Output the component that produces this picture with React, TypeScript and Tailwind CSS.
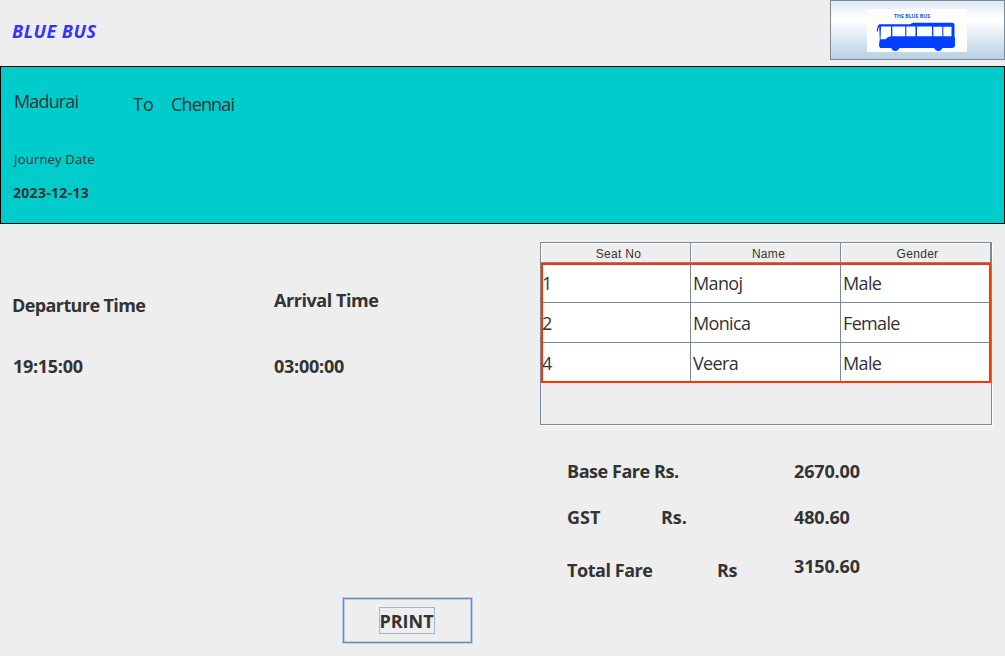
import React from "react";

const passengers = [
  { seat: "1", name: "Manoj", gender: "Male" },
  { seat: "2", name: "Monica", gender: "Female" },
  { seat: "4", name: "Veera", gender: "Male" },
];

function BusLogo() {
  return (
    <svg width="100" height="43" viewBox="0 0 100 43" className="-ml-0.5 block">
      <rect width="100" height="43" fill="#fdfdfb" />
      <text x="27" y="8.800" fontFamily="Open Sans, sans-serif" fontWeight="700" fontSize="5.2" textLength="36" lengthAdjust="spacingAndGlyphs" fill="#1a50f5">
        THE BLUE BUS
      </text>
      <path
        d="M12 15.300H43L46 13.700H85Q87.500 13.700 87.500 16.500V28L88 29V37Q87.800 39 85 39H75.300A4.200 4.200 0 0 1 67.300 39H32.300A4.200 4.200 0 0 1 24.300 39H13.500Q12 38.500 12 36L12.800 30Z"
        fill="#0040ff"
      />
      <path d="M12.500 16Q10.800 17 10.300 22.500" fill="none" stroke="#0040ff" strokeWidth="1.200" />
      <path
        d="M14 17.500H24V27.300Q20.500 28 18.500 30.300H13.500ZM25.300 17.500H38.200V27.300H25.300ZM39.300 17.500H48.500V27.300H39.300ZM50 17.500H65V27.300H50ZM66.300 17.700H75.300V27.300H66.300ZM76.300 17.700H84.500V27.300H76.300Z"
        fill="#fdfdfb"
      />
    </svg>
  );
}

function Header() {
  return (
    <header className="flex h-[66px] items-start justify-between">
      <h1 className="ml-3 mt-[19px] text-[18px] font-bold italic leading-6 tracking-[0.5px] text-[#3333ff]">BLUE BUS</h1>
      <button className="flex h-[60px] w-[175px] items-center justify-center border border-[#7a8a99] bg-[linear-gradient(#dde8f3_0%,#ffffff_30%,#ffffff_34%,#b8cfe5_100%)]">
        <BusLogo />
      </button>
    </header>
  );
}

function Journey() {
  return (
    <section className="h-[158px] border border-black bg-[#00cccc] pl-3">
      <div className="flex items-start pt-[22px] text-[18px] leading-6">
        <span className="w-[120px] pl-px tracking-[-0.85px]">Madurai</span>
        <span className="mt-[3px] w-[38px]">To</span>
        <span className="mt-[3px] tracking-[-0.85px]">Chennai</span>
      </div>
      <p className="mt-[33px] pl-px text-[13px] leading-5 tracking-[0.2px]">Journey Date</p>
      <p className="mt-[14px] text-[14px] font-bold leading-5 tracking-[0.3px]">2023-12-13</p>
    </section>
  );
}

function Times() {
  return (
    <div className="flex w-[540px] text-[18px] font-bold leading-6">
      <div className="w-[262px] pl-3 pt-[69px]">
        <p className="tracking-[-0.6px]">Departure Time</p>
        <p className="mt-[37px] pl-px tracking-[-0.3px]">19:15:00</p>
      </div>
      <div className="pl-3 pt-[64px]">
        <p className="tracking-[-0.45px]">Arrival Time</p>
        <p className="mt-[42px] tracking-[-0.25px]">03:00:00</p>
      </div>
    </div>
  );
}

function PassengerTable() {
  return (
    <div className="mt-[18px] h-[183px] w-[452px] border border-[#7a8a99] shadow-[1px_1px_0_#ffffff]">
      <div className="grid h-5 grid-cols-[150px_150px_150px] border-b border-[#7a8a99] text-center font-['Liberation_Sans',sans-serif] text-[12px] leading-[22px] tracking-[0.3px]">
        <span className="h-[19px] border-r border-[#7a8a99] pl-1.5 shadow-[inset_1px_1px_0_#ffffff]">Seat No</span>
        <span className="h-[19px] border-r border-[#7a8a99] pl-1.5 shadow-[inset_1px_1px_0_#ffffff]">Name</span>
        <span className="h-[19px] border-r border-[#7a8a99] pl-1 shadow-[inset_1px_1px_0_#ffffff]">Gender</span>
      </div>
      <div className="h-[120px] w-[450px] border-2 border-[#ff3300] bg-white text-[18px] tracking-[-0.65px]">
        {passengers.map((p) => (
          <div
            key={p.seat}
            className="grid h-10 grid-cols-[148px_150px_148px] border-b border-[#7a8a99] leading-6 first:h-[38px] last:h-[38px] last:border-b-0 [&>span]:pt-[8px] first:[&>span]:pt-[6px]"
          >
            <span className="-ml-px border-r border-[#7a8a99]">{p.seat}</span>
            <span className="border-r border-[#7a8a99] pl-0.5">{p.name}</span>
            <span className="pl-0.5">{p.gender}</span>
          </div>
        ))}
      </div>
    </div>
  );
}

function Fares() {
  return (
    <div className="flex pl-[27px] pt-[34px] text-[18px] font-bold leading-6">
      <div className="w-[227px] tracking-[-0.45px]">
        <p>Base Fare Rs.</p>
        <p className="mt-[22px] flex tracking-[-0.1px]">
          <span className="w-[94px] tracking-normal">GST</span>
          <span>Rs.</span>
        </p>
        <p className="mt-[29px] flex">
          <span className="w-[150px]">Total Fare</span>
          <span>Rs</span>
        </p>
      </div>
      <div className="tracking-[-0.15px]">
        <p>2670.00</p>
        <p className="mt-[22px]">480.60</p>
        <p className="mt-[25px]">3150.60</p>
      </div>
    </div>
  );
}

export default function App() {
  return (
    <main className="flex h-[656px] w-[1005px] flex-col overflow-hidden bg-[#eeeeee] font-['Open_Sans','Noto_Sans',sans-serif] text-[#333333]">
      <Header />
      <Journey />
      <div className="flex h-[373px]">
        <Times />
        <div>
          <PassengerTable />
          <Fares />
        </div>
      </div>
      <button className="ml-[342px] flex h-[47px] w-[131px] shrink-0 items-center justify-center border border-[#b8cfe5] pr-0.5 shadow-[inset_0_0_0_1px_#7a8a99,inset_0_0_0_2px_#b8cfe5]">
        <span className="flex h-[27px] w-[56px] items-center justify-center border border-[#a3b8cc] text-[18px] font-bold leading-6">PRINT</span>
      </button>
    </main>
  );
}
